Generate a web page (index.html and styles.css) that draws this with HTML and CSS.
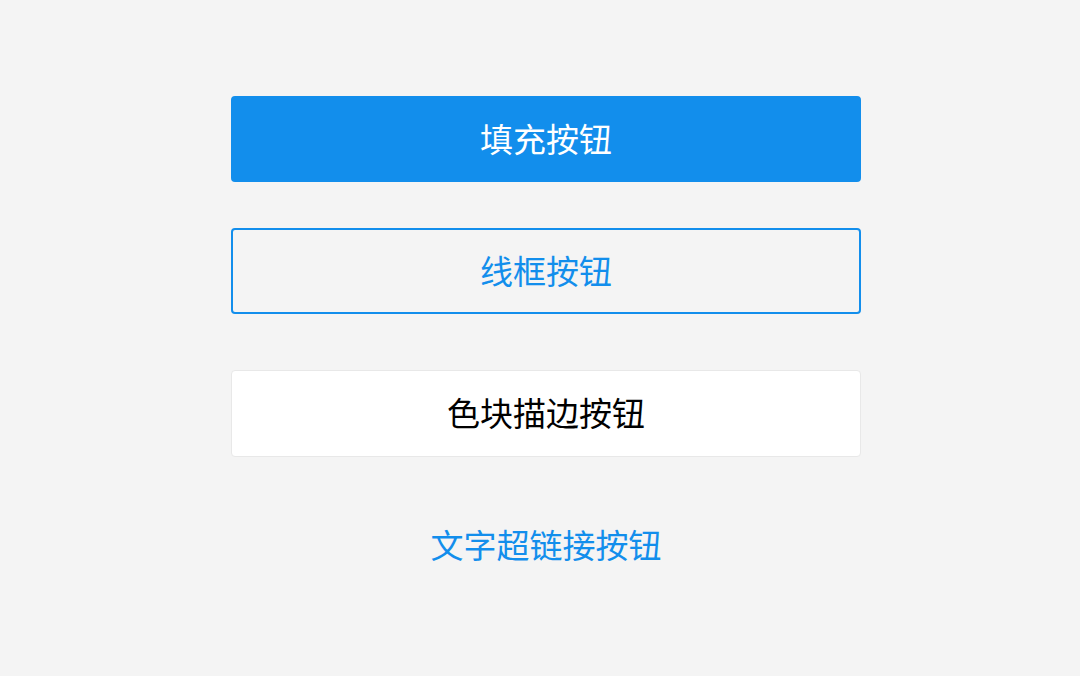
FILE: index.html
```html
<!DOCTYPE html>
<html lang="zh-CN">
<head>
    <meta charset="UTF-8">
    <title>按钮</title>
    <link rel="stylesheet" href="styles.css">
</head>
<body>
<div class="box">
    <button type="button" class="btn btn-fill">填充按钮</button>
    <button type="button" class="btn btn-line">线框按钮</button>
    <button type="button" class="btn btn-block">色块描边按钮</button>
    <a href="#" class="link">文字超链接按钮</a>
</div>
</body>
</html>
```
FILE: styles.css
```css
* {
    padding: 0;
    margin: 0;
    box-sizing: border-box;
}

body {
    background: #f4f4f4;
    font-family: "Noto Sans CJK SC", sans-serif;
}

.box {
    display: flex;
    flex-direction: column;
    align-items: center;
    padding: 96px 219px 96px 231px;
}

.btn,
.link {
    font-family: inherit;
    font-size: 33px;
    line-height: 48px;
    text-align: center;
}

.btn {
    width: 100%;
    padding: 16px 0 18px;
    border: 2px solid #128eec;
    border-radius: 4px;
    cursor: pointer;
}

.btn-fill {
    background: #128eec;
    color: #fff;
}

.btn-line {
    margin-top: 46px;
    background: transparent;
    color: #128eec;
}

.btn-block {
    margin-top: 56px;
    border: 1px solid #e8e8e8;
    padding: 17px 0 20px;
    background: #fff;
    color: #000;
}

.link {
    margin-top: 63px;
    color: #128eec;
    text-decoration: none;
}
```
